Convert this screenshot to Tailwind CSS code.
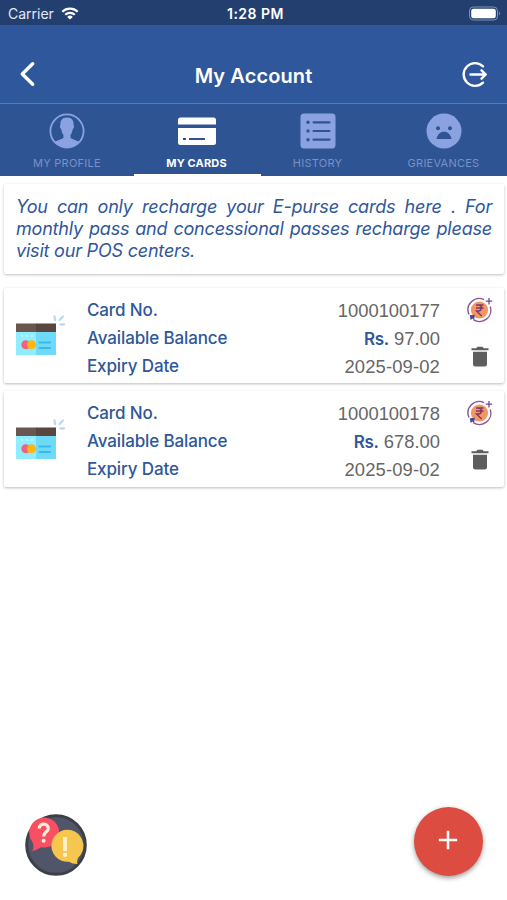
<!DOCTYPE html>
<html lang="en">
<head>
<meta charset="utf-8">
<title>My Account</title>
<script src="https://cdn.jsdelivr.net/npm/@tailwindcss/browser@4"></script>
</head>
<body class="w-[507px] h-[900px] overflow-hidden bg-white font-['Inter','Liberation_Sans',sans-serif] text-[#2f579b]">
<svg class="hidden">
  <symbol id="card" viewBox="0 0 52 44">
    <rect x="1" y="13" width="20.5" height="27" fill="#8eeeff"/><rect x="21" y="13" width="20" height="27" fill="#6edaf8"/>
    <rect x="1" y="8.500" width="20.5" height="8.500" fill="#69564f"/><rect x="21" y="8.500" width="20" height="8.500" fill="#594640"/>
    <path d="M6 21h2M11 21h2M16 21h2" stroke="#c6f8ff" stroke-width="1.500"/>
    <circle cx="10.800" cy="29.800" r="4.500" fill="#f2637b"/><circle cx="16.500" cy="29.800" r="4.500" fill="#ffb60d"/>
    <path d="M24.500 27.500h10.500M24.500 33h10.500" stroke="#3bb9ed" stroke-width="2.200" stroke-linecap="round"/>
    <path d="M39.500 1.500l.6 3.500M44.500 5l3.500-3.500M45.500 9.500h3.500" stroke="#bcd9fb" stroke-width="2.300" stroke-linecap="round"/>
  </symbol>
  <symbol id="recharge" viewBox="0 0 26 26">
    <circle cx="12.500" cy="13" r="8.600" fill="#f39662"/>
    <path d="M17 2.600A11.300 11.300 0 0 0 2 17.500M23.200 9.500A11.300 11.300 0 0 1 6.300 22.600" fill="none" stroke="#8a5592" stroke-width="1.400"/>
    <path d="M22 1v6.400M18.800 4.200h6.400" stroke="#75458c" stroke-width="1.300"/>
    <path d="M2.800 18.300l5-.5-.7 5-1.500-1.300-2 1.500z" fill="#4c4693"/>
    <path d="M9 8h7.500M9 11h7.500M9 8h2.200c4.200 0 4.200 6 0 6H9.500l5.200 5" fill="none" stroke="#7b396f" stroke-width="1.400"/>
  </symbol>
  <symbol id="trash" viewBox="0 0 18 21">
    <path d="M.5 2.200h4.700L6.500.7h5l1.300 1.500h4.700v2H.5zM2 5.800h14V18a2.500 2.500 0 0 1-2.500 2.500h-9A2.500 2.500 0 0 1 2 18z" fill="#5e5e5e"/>
  </symbol>
</svg>

<div class="grid h-[25px] grid-cols-3 items-center bg-[#223f70] px-[8px] pt-[1px] text-white">
  <div class="flex items-center gap-[7px]">
    <span class="text-[14px] text-[#e4e9f2]">Carrier</span>
    <svg class="h-[13px] w-[18px]" viewBox="0 0 18 13"><g fill="none" stroke="#fff" stroke-width="2.200"><path d="M1.300 4.700a11 11 0 0 1 15.400 0"/><path d="M4.200 7.800a6.900 6.900 0 0 1 9.600 0"/></g><path d="M9 12.600L6.200 9.900a4 4 0 0 1 5.600 0z" fill="#fff"/></svg>
  </div>
  <div class="pl-[4px] text-center text-[14px] font-semibold tracking-[0.5px] whitespace-nowrap">1:28 PM</div>
  <svg class="-mr-[2px] h-[15px] w-[33px] justify-self-end" viewBox="0 0 33 15"><rect x="1.500" y="1" width="28" height="13" rx="3.800" fill="none" stroke="#8093b2"/><rect x="3.200" y="2.700" width="24.600" height="9.600" rx="2.200" fill="#fff"/><path d="M31 5.500q2 2 0 4z" fill="#8093b2"/></svg>
</div>

<header class="flex h-[79px] items-center justify-between border-b border-[#5979b0] bg-[#2f579b] pr-[18px] pl-[18px] pt-[22px] text-white">
  <svg class="-mt-[2px] h-[28px] w-[20px]" viewBox="0 0 20 28"><path d="M14.700 3.700L4.300 14l10.400 10.300" fill="none" stroke="#fff" stroke-width="3.400" stroke-linecap="round" stroke-linejoin="round"/></svg>
  <h1 class="pt-[2px] pl-[8px] text-[20px] font-semibold tracking-[0.1px]">My Account</h1>
  <svg class="h-[28px] w-[28px]" viewBox="0 0 28 28"><g fill="none" stroke="#fff" stroke-width="2.400" stroke-linecap="round" stroke-linejoin="round"><path d="M22 5.300A11.400 11.400 0 1 0 22 21.700"/><path d="M9.500 13.500h14M20.500 9.300l4.300 4.200-4.300 4.200"/></g></svg>
</header>

<nav class="flex h-[72px] bg-[#2f5494] text-[11px] tracking-[0.25px] text-[#7891c7]">
  <div class="flex w-[134px] flex-col items-center pt-[9px]">
    <svg class="h-[36px] w-[36px]" viewBox="0 0 36 36"><circle cx="18" cy="18" r="16.600" fill="none" stroke="#8aa3e0" stroke-width="1.800"/><path d="M18 4.500c-4.900 0-7 3.200-6.500 7.500-1 .2-.6 3.400.8 4.300.4 3 1.300 4.500 2.200 5.800v2.100c0 2.100-5.600 2.600-8.800 4.800C9 32.700 13 34 18 34s9-1.300 12.300-5c-3.200-2.200-8.800-2.700-8.800-4.800v-2.100c.9-1.300 1.800-2.800 2.200-5.800 1.400-.9 1.800-4.100.8-4.300.5-4.300-1.600-7.500-6.500-7.500z" fill="#8aa3e0"/></svg>
    <span class="mt-[6px] leading-[16px]">MY PROFILE</span>
  </div>
  <div class="flex w-[127px] flex-col items-center border-b-2 border-white pt-[9px] pr-[2px] text-white">
    <svg class="h-[36px] w-[40px]" viewBox="0 0 40 36"><path d="M1 11.500V7a2.500 2.500 0 0 1 2.500-2.500h33A2.500 2.500 0 0 1 39 7v4.500zM1 15h38v14.500a2.500 2.500 0 0 1-2.500 2.500h-33A2.500 2.500 0 0 1 1 29.500z" fill="#fff"/><path d="M6 26h3M12 26h16" stroke="#2f5494" stroke-width="2.200"/></svg>
    <span class="mt-[6px] font-bold tracking-[0.15px] leading-[16px]">MY CARDS</span>
  </div>
  <div class="flex w-[113px] flex-col items-center pt-[9px]">
    <svg class="h-[36px] w-[36px]" viewBox="0 0 36 36"><rect x=".5" y=".5" width="35" height="35" rx="3.500" fill="#8aa3e0"/><g stroke="#2f5494" stroke-width="2.200" stroke-linecap="round"><path d="M13.500 9.300h16M13.500 18h16M13.500 26.700h16"/></g><g fill="#2f5494"><circle cx="8" cy="9.300" r="1.700"/><circle cx="8" cy="18" r="1.700"/><circle cx="8" cy="26.700" r="1.700"/></g></svg>
    <span class="mt-[6px] leading-[16px]">HISTORY</span>
  </div>
  <div class="flex w-[133px] flex-col items-center pt-[9px] pl-[6px]">
    <svg class="h-[36px] w-[36px]" viewBox="0 0 36 36"><circle cx="18" cy="18" r="17.500" fill="#8aa3e0"/><g fill="#2f5494"><circle cx="12" cy="15.200" r="2"/><circle cx="24" cy="15.200" r="2"/><path d="M10.500 26c.8-4.500 3.700-7.200 7.500-7.200s6.700 2.700 7.500 7.200z"/></g></svg>
    <span class="mt-[6px] leading-[16px]">GRIEVANCES</span>
  </div>
</nav>

<main class="flex flex-col pt-[8px] pr-[3px] pl-[4px]">
  <p class="h-[90px] rounded-[2px] bg-white px-[12px] pt-[12px] text-justify text-[18px] tracking-[-0.2px] leading-[22px] italic shadow-[0_1px_3px_rgba(0,0,0,0.25)]">You can only recharge your E-purse cards here . For monthly pass and concessional passes recharge please visit our POS centers.</p>

  <section class="mt-[14px] flex h-[95px] rounded-[2px] bg-white shadow-[0_1px_3px_rgba(0,0,0,0.27)]">
    <svg class="mt-[27px] ml-[11px] h-[44px] w-[52px]"><use href="#card"/></svg>
    <div class="ml-[20px] grow pt-[8px] text-[17px] tracking-[-0.13px] leading-[28px] font-medium">
      <div>Card No.</div><div>Available Balance</div><div>Expiry Date</div>
    </div>
    <div class="pt-[9px] text-right font-['Liberation_Sans',sans-serif] text-[18.4px] leading-[28px] text-[#666]">
      <div>1000100177</div>
      <div><span class="font-['Inter',sans-serif] text-[17px] font-semibold tracking-[-0.3px] text-[#2f579b]">Rs.</span> 97.00</div>
      <div class="tracking-[0.15px]">2025-09-02</div>
    </div>
    <div class="ml-[27px] flex w-[37px] flex-col pt-[9px]">
      <svg class="h-[26px] w-[26px]"><use href="#recharge"/></svg>
      <svg class="mt-[23px] ml-[4px] h-[21px] w-[18px]"><use href="#trash"/></svg>
    </div>
  </section>

  <section class="mt-[8px] flex h-[96px] rounded-[2px] bg-white shadow-[0_1px_3px_rgba(0,0,0,0.27)]">
    <svg class="mt-[28px] ml-[11px] h-[44px] w-[52px]"><use href="#card"/></svg>
    <div class="ml-[20px] grow pt-[8px] text-[17px] tracking-[-0.13px] leading-[28px] font-medium">
      <div>Card No.</div><div>Available Balance</div><div>Expiry Date</div>
    </div>
    <div class="pt-[9px] text-right font-['Liberation_Sans',sans-serif] text-[18.4px] leading-[28px] text-[#666]">
      <div>1000100178</div>
      <div><span class="font-['Inter',sans-serif] text-[17px] font-semibold tracking-[-0.3px] text-[#2f579b]">Rs.</span> 678.00</div>
      <div class="tracking-[0.15px]">2025-09-02</div>
    </div>
    <div class="ml-[27px] flex w-[37px] flex-col pt-[9px]">
      <svg class="h-[26px] w-[26px]"><use href="#recharge"/></svg>
      <svg class="mt-[23px] ml-[4px] h-[21px] w-[18px]"><use href="#trash"/></svg>
    </div>
  </section>
</main>

<button class="fixed top-[813px] left-[24px]" aria-label="Help">
  <svg class="h-[64px] w-[64px]" viewBox="0 0 64 64">
    <circle cx="32" cy="32" r="29.300" fill="#50556a" stroke="#3d4047" stroke-width="3"/>
    <path d="M8 38q3-4 .2-9.500A15 15 0 1 1 17 34.200Q13 37 8 38z" fill="#fa4f62"/>
    <path d="M53.500 51q-1-3.500.8-6.500A16 16 0 1 0 45 48.700Q48 51 53.500 51z" fill="#f6c64e"/>
    <path d="M15.300 15.500c0-6.300 9-5.600 9 0 0 3.500-4.700 3.300-4.700 8" fill="none" stroke="#fff0dc" stroke-width="3.200"/><circle cx="19.600" cy="27.700" r="2" fill="#fff0dc"/>
    <path d="M41 24v14" stroke="#fff0c8" stroke-width="4"/><circle cx="41" cy="41.700" r="2.200" fill="#fff0c8"/>
  </svg>
</button>
<button class="fixed top-[807px] left-[414px] flex h-[69px] w-[69px] items-center justify-center rounded-full bg-[#dc4c40] shadow-[0_2px_5px_rgba(0,0,0,0.4)]" aria-label="Add card">
  <svg class="mr-[1px] mb-[3px] h-[20px] w-[20px]" viewBox="0 0 20 20"><path d="M10 .8v18.400M.8 10h18.400" stroke="#fff" stroke-width="2.500"/></svg>
</button>
</body>
</html>
